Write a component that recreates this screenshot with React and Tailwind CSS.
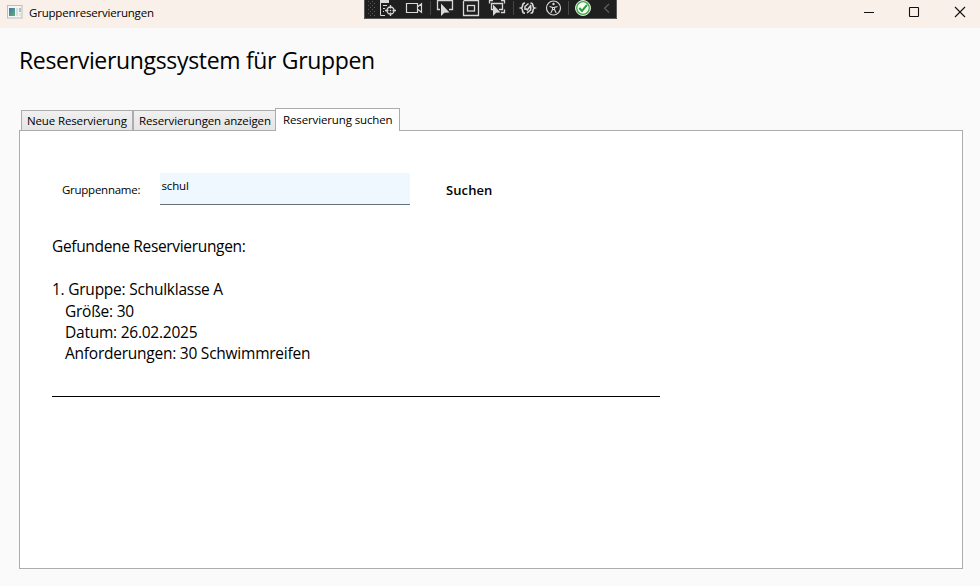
const uiFont = 'font-["Open_Sans","Noto_Sans",sans-serif]';

function AppIcon() {
  return (
    <svg className="block h-[14px] w-[16px]" viewBox="0 0 16 14">
      <defs>
        <linearGradient id="pane" x1="0" y1="0" x2="1" y2="1">
          <stop offset="0" stopColor="#3f74a8" />
          <stop offset="1" stopColor="#5fb07a" />
        </linearGradient>
      </defs>
      <rect x="0.5" y="0.5" width="14.5" height="12.5" fill="#f6f6f6" stroke="#bdbdbd" />
      <rect x="2" y="3" width="6" height="8" fill="url(#pane)" />
      <rect x="9" y="3" width="2" height="8" fill="#d9dde0" />
      <rect x="12" y="3" width="2" height="4" fill="#9fc8b6" />
      <rect x="12" y="8" width="2" height="3" fill="#e2e5e6" />
    </svg>
  );
}

function DebugToolbar() {
  return (
    <svg className="block h-[19px] w-[253px]" viewBox="0 0 253 19" fill="none" stroke="#d8d8d8">
      <rect width="253" height="19" fill="#1f1f1f" stroke="none" />
      <path d="M0.5 0V18.5H252.5V0" stroke="#5a5a5a" />
      <path d="M4.5 1V16M8.5 1V16" stroke="#5c5c5c" strokeDasharray="1 3" />
      <path d="M6.5 3V16M10.5 3V16" stroke="#5c5c5c" strokeDasharray="1 3" />
      <path d="M66.5 1V15M149.5 1V15M204.5 1V15" stroke="#464646" />
      {/* live visual tree */}
      <path d="M16.5 1V15.5H21M19 5.5H23M19 8.5H21M19 11.5H20" />
      <path d="M16 0H25V3H16Z" fill="#d8d8d8" stroke="none" />
      <circle cx="26.5" cy="10.5" r="3.5" strokeWidth="1.3" />
      <path d="M26.5 5V8.5M26.5 12.5V16M21 10.5H24.5M28.5 10.5H32" strokeWidth="1.3" />
      <circle cx="26.5" cy="10.5" r="0.8" fill="#d8d8d8" stroke="none" />
      {/* camera */}
      <path d="M42.5 3.5H53.5V12.5H42.500Z M54 6.5L57.5 3.8V12.2L54 9.5" strokeWidth="1.2" />
      {/* select element */}
      <path d="M76 9.5H73.5V0.5H88.5V9.5H85" strokeWidth="1.3" />
      <path d="M77 3.5V16L80.3 12.7L85.5 12.5Z" fill="#d8d8d8" stroke="none" />
      {/* layout adorners */}
      <path d="M99.5 1V15.5H114.5V0.7H99.5" strokeWidth="1.3" />
      <rect x="103.5" y="5.5" width="7" height="5.5" strokeWidth="1.3" />
      {/* track focused element */}
      <path d="M125.500 3.5V0.7H129M137 0.7H140.5V3.5M140.500 9.5V12.500H137M129 9.5H127.5V3.5H138.5V9.5H135" strokeWidth="1.3" />
      <path d="M129 4.5V16L132.2 12.7L136.5 12.5Z" fill="#d8d8d8" stroke="none" />
      {/* hot reload */}
      <path d="M161 3Q158.500 3 158.500 6Q158.500 7.5 157 8Q158.500 8.5 158.500 10.500Q158.500 13.300 161 13.300M166.500 3Q169 3 169 6Q169 7.500 170.500 8Q169 8.500 169 10.500Q169 13.300 166.500 13.300" strokeWidth="1.6" />
      <path d="M161 10V6.500L164.500 3.500M166.700 6V9.800L163 13M162 8.500L163.300 10L167 5" strokeWidth="1.500" />
      {/* accessibility */}
      <circle cx="189.5" cy="8" r="7" strokeWidth="1.2" />
      <circle cx="189.5" cy="4" r="1.2" fill="#d8d8d8" stroke="none" />
      <path d="M185.5 6.5L188.5 7.5V9.5L186.8 13M193.5 6.5L190.5 7.5V9.5L192.2 13M188.5 7.5H190.5M188.5 9.5H190.5" strokeWidth="1.1" />
      {/* status */}
      <circle cx="219" cy="8" r="7.5" fill="#f4fff4" stroke="#d8ead8" strokeWidth="1" />
      <circle cx="219" cy="8" r="6.3" fill="#f4fff4" stroke="#3fa648" strokeWidth="1.3" />
      <path d="M215.3 8L218 11L223 4.8" stroke="#2f9a3a" strokeWidth="2" />
      <path d="M245 4L240.5 8.3L245 12.5" stroke="#5f5f5f" strokeWidth="1.2" />
    </svg>
  );
}

function TitleBar() {
  return (
    <header className="relative flex h-7 items-start justify-between bg-[#f9f1e9]">
      <div className="flex pt-[5px] pl-[7px]">
        <AppIcon />
        <span className="ml-[6px] text-[11.5px] leading-4 tracking-[-0.21px]">Gruppenreservierungen</span>
      </div>
      <div className="absolute top-0 left-[364px]">
        <DebugToolbar />
      </div>
      <svg className="block h-7 w-[120px]" viewBox="0 0 120 28" fill="none" stroke="#111">
        <path d="M4 12.5H14" />
        <rect x="49.5" y="7.5" width="9" height="9" rx="0.5" strokeWidth="1.1" />
        <path d="M95 7L105 17M105 7L95 17" strokeWidth="1.1" />
      </svg>
    </header>
  );
}

function Tabs() {
  const idle =
    "h-[21px] border border-[#acacac] bg-linear-to-b from-[#f0f0f0] to-[#e5e5e5] pl-[5px] pt-[2px]";
  return (
    <nav className="relative z-10 -mb-px flex h-[23px] items-end pl-[2px] text-[11.5px] leading-4 tracking-[-0.13px] whitespace-nowrap">
      <div className={`${idle} w-[112px]`}>Neue Reservierung</div>
      <div className={`${idle} w-[143px] border-r-0`}>Reservierungen anzeigen</div>
      <div className="-ml-px h-[23px] w-[125px] border border-b-0 border-[#acacac] bg-white pt-[3px] pl-[7px]">
        Reservierung suchen
      </div>
    </nav>
  );
}

export default function App() {
  return (
    <div className={`${uiFont} flex h-[586px] w-[980px] flex-col overflow-hidden bg-[#fafafa] text-black`}>
      <TitleBar />
      <main className="flex flex-1 flex-col pr-[17px] pb-[17px] pl-[19px]">
        <h1 className="h-20 pt-4 text-[23px] leading-8 tracking-[-0.33px] whitespace-nowrap">
          Reservierungssystem für Gruppen
        </h1>
        <Tabs />
        <section className="flex-1 border border-[#acacac] bg-white pt-[42px] pl-8">
          <div className="flex h-8 text-[11.5px] leading-4">
            <label className="w-[108px] pt-[9px] pl-[10px] tracking-[-0.26px]">Gruppenname:</label>
            <div className="w-[250px] border-b border-[#65717c] bg-[#f0f8ff] pt-[5px] pl-[1.5px] tracking-[-0.15px]">
              schul
            </div>
            <button className="ml-9 flex pt-[9px] text-[13px] leading-4 font-semibold tracking-[0.1px]">
              Suchen
            </button>
          </div>
          <div className="mt-[31px] w-[608px] text-[15.5px] leading-[21.3px] tracking-[-0.24px] whitespace-pre">
            <p className="tracking-[-0.33px]">Gefundene Reservierungen:</p>
            <div className="mt-[22px]">
              <p>1. Gruppe: Schulklasse A</p>
              <div className="pl-[13px]">
                <p>Größe: 30</p>
                <p>Datum: 26.02.2025</p>
                <p>Anforderungen: 30 Schwimmreifen</p>
              </div>
            </div>
            <hr className="mt-[32px] border-black" />
          </div>
        </section>
      </main>
    </div>
  );
}
